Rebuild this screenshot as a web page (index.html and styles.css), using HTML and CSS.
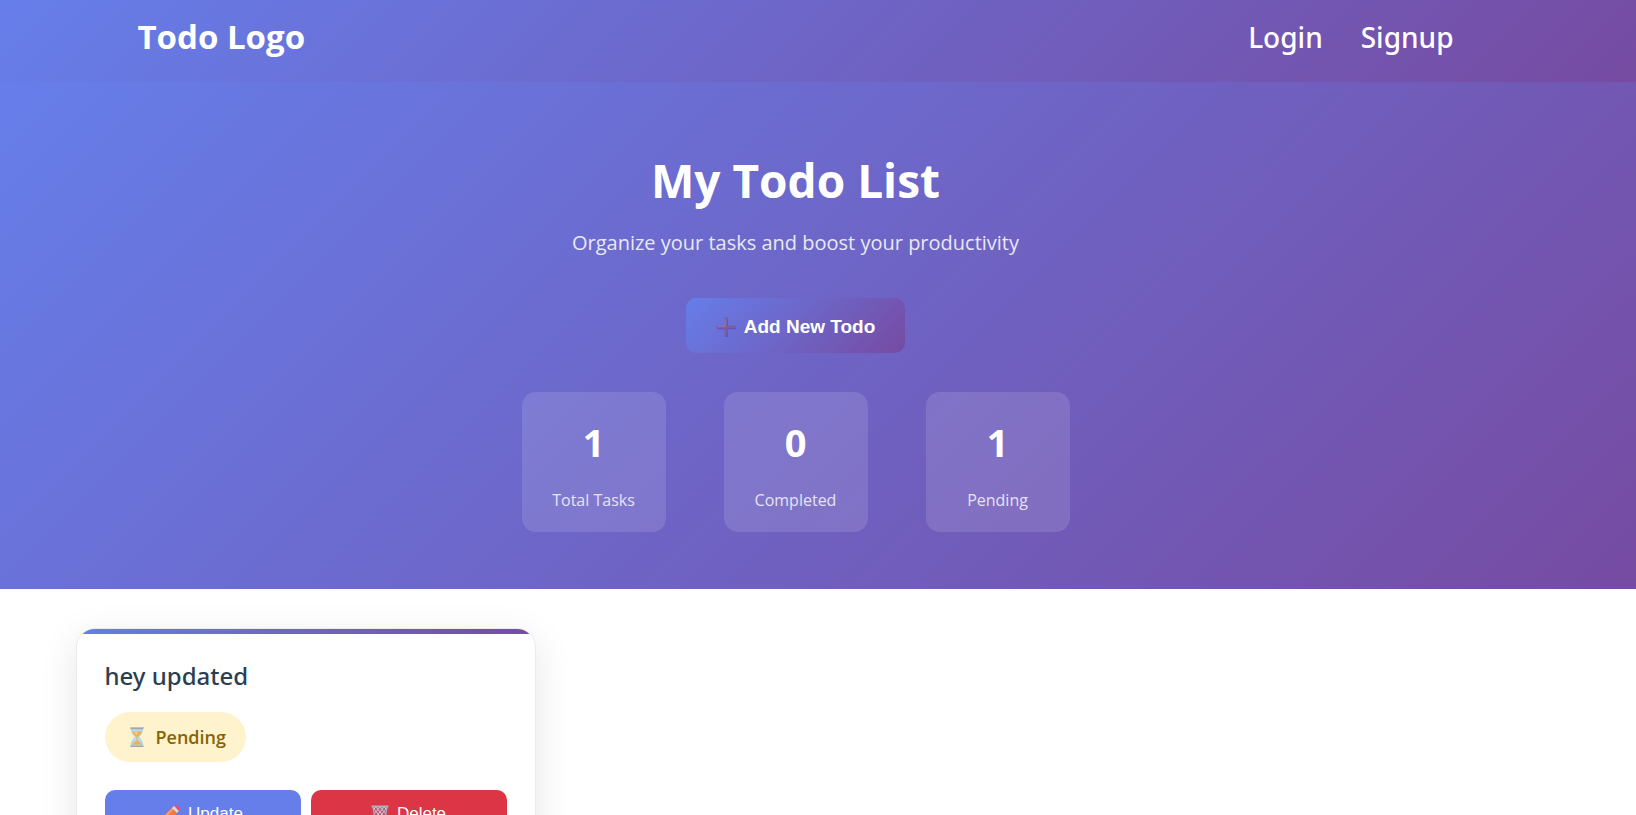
FILE: index.html
```
<!DOCTYPE html>
<html lang="en">
<head>
<meta charset="utf-8">
<meta name="viewport" content="width=device-width, initial-scale=1">
<title>My Todo List</title>
<link rel="stylesheet" href="styles.css">
</head>
<body>
<header class="navbar">
  <div class="navbar-inner">
    <a class="logo" href="#">Todo Logo</a>
    <nav class="nav-links">
      <a href="#login">Login</a>
      <a href="#signup">Signup</a>
    </nav>
  </div>
</header>
<main>
  <section class="hero">
    <h1 class="hero-title">My Todo List</h1>
    <p class="hero-subtitle">Organize your tasks and boost your productivity</p>
    <button class="add-button" type="button">
      <svg class="icon-plus" viewBox="0 0 20 20" aria-hidden="true">
        <path d="M10.500 2.500v16.500M2.500 10.700h16.500" stroke="#7b3fc6" stroke-width="3" stroke-linecap="round"/>
        <path d="M10 1.800v16M1.800 10h16.500" stroke="#75619f" stroke-width="3" stroke-linecap="round"/>
        <path d="M9.200 2v7.200H2" fill="none" stroke="#9184b5" stroke-width=".9"/>
      </svg>
      <span>Add New Todo</span>
    </button>
    <div class="stats">
      <div class="stat"><span class="stat-number">1</span><span class="stat-label">Total Tasks</span></div>
      <div class="stat"><span class="stat-number">0</span><span class="stat-label">Completed</span></div>
      <div class="stat"><span class="stat-number">1</span><span class="stat-label">Pending</span></div>
    </div>
  </section>
  <section class="todos">
    <div class="todo-grid">
      <article class="card">
        <h2 class="card-title">hey updated</h2>
        <span class="badge">
          <svg class="icon-hourglass" viewBox="0 0 16 20" aria-hidden="true">
            <path d="M2.500 2h11c0 4-1.500 5.500-4 8 2.500 2.500 4 4 4 8h-11c0-4 1.500-5.500 4-8-2.500-2.500-4-4-4-8z" fill="#b5dcf5" stroke="#94bfdc" stroke-width=".6"/>
            <path d="M3.500 4.500h9C12 7 10 8.500 8.500 10v3.500c1.800.8 3.500 2.500 4 4h-9c.5-1.500 2.200-3.200 4-4V10C6 8.500 4 7 3.500 4.500z" fill="#f6ae45"/>
            <path d="M5 5.300h4L7.500 8z" fill="#fbd487"/>
            <path d="M1.500 0h13v2h-13zM1.500 18h13v2h-13z" fill="#a5a4aa"/>
            <path d="M1.500 0h13v.8h-13zM1.500 18h13v.8h-13z" fill="#c9c8ca"/>
          </svg>
          <span>Pending</span>
        </span>
        <div class="card-actions">
          <button class="action update" type="button">
            <svg class="icon" viewBox="0 0 18 18" aria-hidden="true">
              <path d="M1.500 11.500L10.500 2.500l5 5-9 9L1 17.500z" fill="#f4753e"/>
              <path d="M1.500 11.500l9-9 1.600 1.600-9 9z" fill="#ff9a57"/>
              <path d="M1.500 12l4.500 4.500-5 1z" fill="#f6c991"/>
              <path d="M10 3L12.200.8l5 5L15 8z" fill="#d7d5df"/>
              <path d="M12.200.8L13 .2q.8-.5 1.600.2l2.900 2.900q.6.800 0 1.500l-1 1z" fill="#f34b52"/>
              <path d="M1.500 15.500L1 17.500l2-.5z" fill="#43373d"/>
            </svg>
            <span>Update</span>
          </button>
          <button class="action delete" type="button">
            <svg class="icon" viewBox="0 0 18 18" aria-hidden="true">
              <path d="M1.500 1.500h15L14.500 17h-11z" fill="#b65b70"/>
              <path d="M2 3l11 13M5 2l9 11M9 2l6 7M16 3L5 16M13 2L4 13M9 2L3 9M13 2l3 3M5 2L2 5M3 10l6 6M15 10l-6 6" fill="none" stroke="#d0c6d8" stroke-width="1"/>
              <path d="M2 2l2 14.500h10L16 2" fill="none" stroke="#aaa5b8" stroke-width="1.200"/>
              <path d="M.5.500h17v2H.5z" fill="#b4aebe"/>
            </svg>
            <span>Delete</span>
          </button>
        </div>
      </article>
    </div>
  </section>
</main>
</body>
</html>
```
FILE: styles.css
```
* {
  box-sizing: border-box;
}

body {
  margin: 0;
  background: #fff;
  color: #2c3e50;
  font-family: "Segoe UI", "Open Sans", "Noto Sans", sans-serif;
}

h1, h2, p {
  margin: 0;
}

.navbar {
  padding: 12px 45px 20px 0;
  background: linear-gradient(135deg, #667eea 0%, #764ba2 100%);
}

.navbar-inner {
  display: flex;
  align-items: center;
  justify-content: space-between;
  max-width: 1316px;
  min-height: 50px;
  margin: 0 auto;
}

.logo,
.nav-links a {
  color: #fff;
  text-decoration: none;
}

.logo {
  font-size: 33px;
  line-height: 48px;
  font-weight: 700;
}

.nav-links {
  display: flex;
  gap: 38px;
  font-family: "Segoe UI", "Noto Sans", "Open Sans", sans-serif;
  font-size: 28px;
  line-height: 48px;
  font-weight: 500;
}

.hero {
  display: flex;
  flex-direction: column;
  align-items: center;
  padding: 64px 45px 57px 0;
  background: linear-gradient(135deg, #667eea 0%, #764ba2 100%);
  color: #fff;
  text-align: center;
}

.hero-title {
  margin-bottom: 12px;
  font-size: 46px;
  line-height: 68px;
  font-weight: 700;
}

.hero-subtitle {
  margin-bottom: 38px;
  font-size: 20px;
  line-height: 34px;
  opacity: 0.85;
}

.add-button {
  display: flex;
  align-items: center;
  gap: 8px;
  margin-bottom: 39px;
  padding: 18px 30px 15px;
  border: 0;
  border-radius: 10px;
  background: linear-gradient(135deg, #667eea 0%, #764ba2 100%);
  color: #fff;
  font: 700 19px/22px "Liberation Sans", Arial, sans-serif;
}

.icon-plus {
  width: 20px;
  height: 20px;
}

.stats {
  display: flex;
  flex-wrap: wrap;
  justify-content: center;
  gap: 58px;
}

.stat {
  display: flex;
  flex-direction: column;
  gap: 16px;
  min-width: 144px;
  padding: 22px 28px 18px;
  border-radius: 14px;
  background: rgba(255, 255, 255, 0.12);
}

.stat-number {
  font-size: 38px;
  line-height: 56px;
  font-weight: 700;
}

.stat-label {
  font-size: 16px;
  line-height: 28px;
  opacity: 0.8;
}

.todos {
  padding: 39px 45px 40px 0;
}

.todo-grid {
  display: grid;
  grid-template-columns: repeat(auto-fill, minmax(420px, 1fr));
  gap: 30px;
  max-width: 1440px;
  margin: 0 auto;
}

.card {
  position: relative;
  overflow: hidden;
  padding: 28px;
  border: 1px solid #e9ecef;
  border-radius: 19px;
  box-shadow: 0 10px 38px rgba(0, 0, 0, 0.1);
}

.card::before {
  content: "";
  position: absolute;
  inset: 0 0 auto;
  height: 5px;
  background: linear-gradient(90deg, #667eea, #764ba2);
}

.card-title {
  margin-bottom: 17px;
  font-family: "Segoe UI", "Noto Sans", "Open Sans", sans-serif;
  font-size: 24px;
  line-height: 38px;
  font-weight: 500;
}

.badge {
  display: inline-flex;
  align-items: center;
  gap: 11px;
  padding: 11px 20px 11px 24px;
  border-radius: 25px;
  background: #fff3cd;
  color: #856404;
  font-size: 18px;
  line-height: 28px;
  font-weight: 600;
}

.icon-hourglass {
  width: 16px;
  height: 20px;
}

.card-actions {
  display: grid;
  grid-template-columns: 1fr 1fr;
  gap: 10px;
  margin-top: 28px;
}

.action {
  display: flex;
  align-items: center;
  justify-content: center;
  gap: 8px;
  padding: 14px 16px 12px;
  border: 0;
  border-radius: 10px;
  color: #fff;
  font: 400 17px/20px "Liberation Sans", Arial, sans-serif;
}

.update {
  background: #667eea;
}

.delete {
  background: #dc3545;
}

.icon {
  width: 18px;
  height: 18px;
}
```
